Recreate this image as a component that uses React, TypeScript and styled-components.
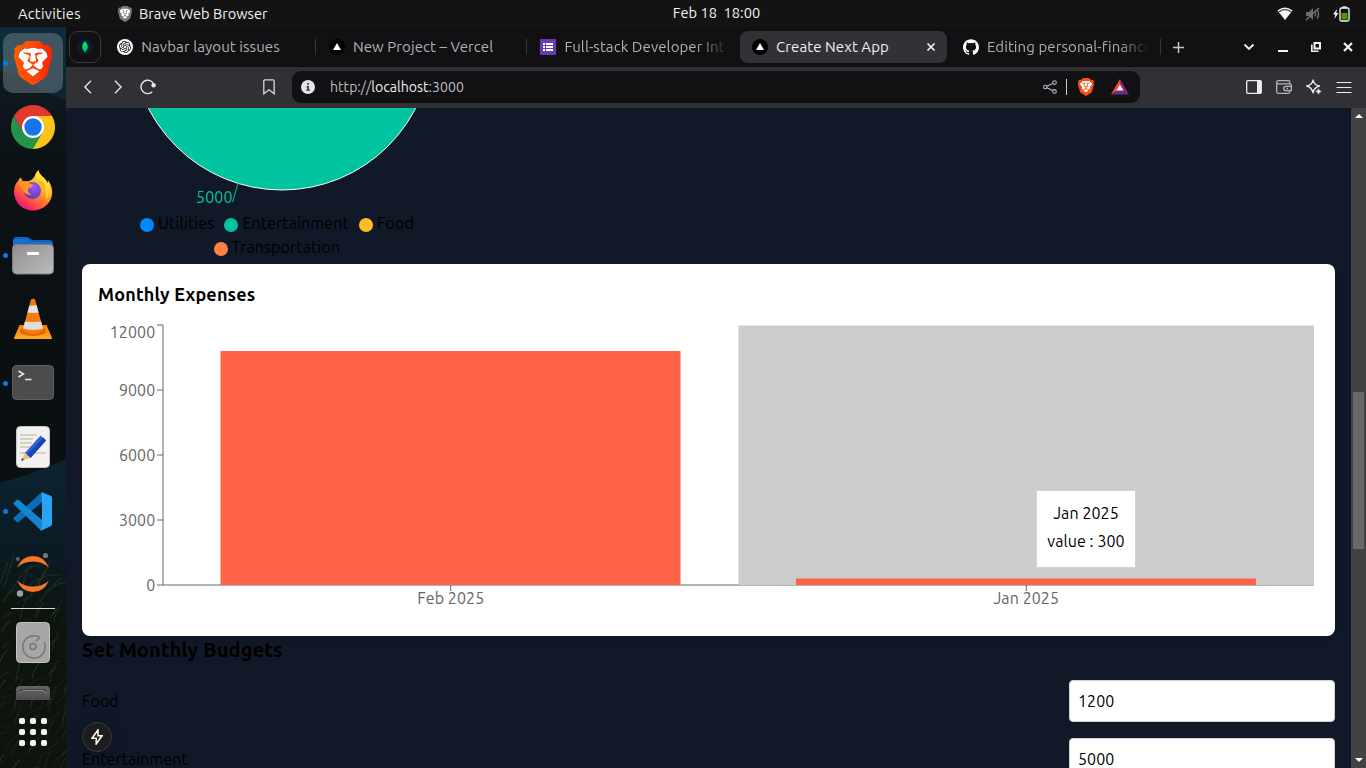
import React from "react";
import styled, { createGlobalStyle, css } from "styled-components";
import { SiBrave, SiMongodb, SiOpenai, SiGithub } from "react-icons/si";

const Global = createGlobalStyle`
  * { box-sizing: border-box; }
  html, body { margin: 0; padding: 0; background: #111827; overflow: hidden; }
  body { font-family: "Ubuntu", "Noto Sans", sans-serif; font-size: 16px; letter-spacing: 0.08px; color: #000; font-variant-ligatures: none; }
  svg { display: block; flex: none; }
`;

const Desktop = styled.div`
  width: 1366px;
  height: 768px;
  display: grid;
  grid-template-rows: 27px 741px;
  overflow: hidden;
`;

/* ---------- system bar ---------- */
const SystemBar = styled.header`
  display: grid;
  grid-template-columns: 1fr auto 1fr;
  align-items: center;
  background: #131313;
  color: #f2f2f2;
  font-size: 14.6px;
  letter-spacing: 0;
  line-height: 27px;
  white-space: pre;
`;
const SystemLeft = styled.div`
  display: flex;
  align-items: center;
  padding-left: 18px;
`;
const Activities = styled.span`
  width: 100px;
  letter-spacing: 0.3px;
`;
const AppName = styled.span`
  padding-left: 7px;
`;
const Clock = styled.span`
  position: relative;
  left: 33.5px;
  line-height: 25px;
  height: 27px;
`;
const SystemRight = styled.div`
  display: flex;
  align-items: center;
  justify-content: flex-end;
  gap: 12px;
  padding-right: 16px;
`;

const Body = styled.div`
  display: grid;
  grid-template-columns: 66px 1300px;
  min-height: 0;
`;

/* ---------- dock ---------- */
const Dock = styled.nav`
  position: relative;
  overflow: hidden;
  display: flex;
  flex-direction: column;
  align-items: center;
  gap: 4px;
  padding-top: 6px;
  background: #0b1013;
`;
const Wallpaper = styled.svg`
  position: absolute;
  inset: 0;
`;
const DockTile = styled.div<{ $active?: boolean; $nudge?: number }>`
  position: relative;
  width: 60px;
  height: 60px;
  flex: none;
  display: flex;
  align-items: center;
  justify-content: center;
  border-radius: 10px;
  padding-bottom: ${(p) => p.$nudge ?? 0}px;
  ${(p) => p.$active && css`background: rgba(125, 140, 147, 0.45);`}
`;
const RunningDot = styled.i`
  position: absolute;
  left: 0;
  top: 27.5px;
  width: 5px;
  height: 5px;
  border-radius: 50%;
  background: #0a78e6;
`;
const DockLine = styled.div`
  position: relative;
  width: 44px;
  height: 1px;
  margin: -1px 0 0;
  flex: none;
  background: #d8d8d8;
`;
const DockCut = styled.div`
  position: relative;
  height: 28px;
  flex: none;
  padding-top: 9px;
`;
const DockApps = styled.div`
  position: relative;
  padding-top: 9px;
`;

/* ---------- browser ---------- */
const Browser = styled.section`
  display: grid;
  grid-template-rows: 40px 41px 660px;
  min-width: 0;
`;
const TabStrip = styled.div`
  display: flex;
  align-items: center;
  background: #111113;
  padding-left: 3px;
`;
const PinnedTab = styled.div`
  width: 32px;
  height: 32px;
  margin-right: 4.3px;
  flex: none;
  display: flex;
  align-items: center;
  justify-content: center;
  border: 1px solid #38383c;
  border-radius: 9px;
`;
const PinnedIcon = styled.span`
  width: 16px;
  height: 16px;
  border-radius: 50%;
  background: #04202e;
  color: #06e567;
  display: flex;
  align-items: center;
  justify-content: center;
`;
const Tab = styled.div<{ $active?: boolean; $divider?: boolean; $last?: boolean }>`
  width: ${(p) => (p.$active ? 207.2 : p.$last ? 209.6 : 210.6)}px;
  margin-right: ${(p) => (p.$active ? 3.7 : 1)}px;
  height: ${(p) => (p.$active ? 32 : 16)}px;
  flex: none;
  display: flex;
  align-items: center;
  padding: 0 11px 0 12px;
  border-radius: ${(p) => (p.$active ? 8 : 0)}px;
  background: ${(p) => (p.$active ? "#313136" : "transparent")};
  border-right: ${(p) => (p.$divider ? "1px solid #37373b" : "0")};
`;
const TabTitle = styled.span<{ $active?: boolean; $fade?: boolean }>`
  flex: 1;
  min-width: 0;
  margin-left: 8px;
  overflow: hidden;
  white-space: nowrap;
  line-height: 24px;
  font-size: 15px;
  letter-spacing: 0.08px;
  color: ${(p) => (p.$active ? "#f0f0f2" : "#b0b0b3")};
  ${(p) => p.$fade && css`mask-image: linear-gradient(90deg, #000 calc(100% - 30px), transparent);`}
`;
const NewTab = styled.div`
  width: 34px;
  display: flex;
  justify-content: center;
`;
const WindowButtons = styled.div`
  margin-left: auto;
  display: flex;
  align-items: center;
  padding-right: 2px;
`;
const WindowButton = styled.div<{ $w: number }>`
  width: ${(p) => p.$w}px;
  display: flex;
  justify-content: center;
`;
const Toolbar = styled.div`
  display: flex;
  align-items: center;
  padding: 0 7px 1px;
  background: #313035;
`;
const ToolButton = styled.div`
  width: 30px;
  height: 32px;
  flex: none;
  display: flex;
  align-items: center;
  justify-content: center;
`;
const BookmarkSlot = styled.div`
  width: 129px;
  display: flex;
  justify-content: flex-end;
  padding-right: 17px;
`;
const AddressBar = styled.div`
  width: 848px;
  height: 32px;
  flex: none;
  display: flex;
  align-items: center;
  padding: 0 11px 0 9px;
  border-radius: 9px;
  background: #111114;
  color: #bdbdc1;
  font-size: 14.1px;
  letter-spacing: 0;
`;
const Url = styled.span`
  margin: 0 auto 0 15px;
  b { font-weight: 400; color: #ededf0; }
`;
const AddressActions = styled.div`
  display: flex;
  align-items: center;
`;
const AddressRule = styled.i`
  width: 1px;
  height: 16px;
  margin: 0 11px 0 9px;
  background: #c9c9cc;
`;
const RewardsIcon = styled.svg`
  margin-left: 17px;
`;
const ToolbarEnd = styled.div`
  display: flex;
  margin-left: auto;
`;

/* ---------- page ---------- */
const Viewport = styled.div`
  display: grid;
  grid-template-columns: 1285px 15px;
  min-height: 0;
`;
const Page = styled.main`
  position: relative;
  overflow: hidden;
  padding: 0 16px;
  background: #111827;
`;
const PieBlock = styled.div`
  width: 400px;
  height: 156px;
`;
const LegendRow = styled.div`
  display: flex;
  justify-content: center;
  height: 24px;
  line-height: 22px;
  letter-spacing: 0.13px;
`;
const LegendText = styled.span`
  display: block;
  height: 24px;
`;
const LegendItem = styled.span<{ $color: string }>`
  display: flex;
  align-items: center;
  margin-right: 10px;
  &::before {
    content: "";
    width: 14px;
    height: 14px;
    margin: 1px 4px 0 0;
    border-radius: 50%;
    background: ${(p) => p.$color};
  }
`;
const Card = styled.section`
  position: relative;
  height: 372px;
  padding: 16px;
  border-radius: 8px;
  background: #fff;
  box-shadow: 0 4px 6px -1px rgba(0, 0, 0, 0.1);
`;
const CardTitle = styled.h3`
  margin: 0 0 12px;
  font-size: 18px;
  font-weight: 700;
  letter-spacing: 0.18px;
  line-height: 28px;
`;
const Tooltip = styled.div`
  position: absolute;
  left: 954px;
  top: 226px;
  width: 100px;
  height: 78px;
  padding: 10px 0 0;
  border: 1px solid #d2d2d2;
  background: #fff;
  text-align: center;
`;
const TooltipLine = styled.p`
  margin: 0 0 4px;
  line-height: 24px;
  white-space: nowrap;
`;
const BudgetTitle = styled.h2`
  margin: 0 0 16px;
  font-size: 20px;
  font-weight: 700;
  letter-spacing: 0.16px;
  line-height: 28px;
`;
const BudgetRow = styled.div`
  display: flex;
  align-items: center;
  justify-content: space-between;
  height: 42px;
  margin-bottom: 16px;
`;
const BudgetField = styled.div`
  width: 266px;
  height: 42px;
  padding: 0 8px;
  line-height: 40px;
  border: 1px solid #d1d1d1;
  border-radius: 4px;
  background: #fff;
`;
const DevBadge = styled.div`
  position: absolute;
  left: 16px;
  top: 614px;
  width: 30px;
  height: 30px;
  display: flex;
  align-items: center;
  justify-content: center;
  border: 1px solid #3b3b3d;
  border-radius: 50%;
  background: #1d1d1f;
  box-shadow: 0 4px 16px rgba(0, 0, 0, 0.25);
`;
const ScrollTrack = styled.div`
  display: flex;
  flex-direction: column;
  align-items: center;
  padding: 6px 0 5px;
  background: #424242;
`;
const ScrollThumb = styled.div`
  width: 11px;
  height: 157px;
  margin: 274px 0 209px;
  flex: none;
  background: #686868;
`;

/* ---------- icons ---------- */
function Brave({ size, height, fill }: { size: number; height: number; fill: string }) {
  return (
    <svg width={size} height={height} viewBox="2 0 20 24" preserveAspectRatio="none">
      <defs>
        <linearGradient id="braveOrange" gradientUnits="userSpaceOnUse" x1="2" y1="0" x2="22" y2="0">
          <stop offset="0" stopColor="#ff5a00" />
          <stop offset="0.5" stopColor="#ff4a0a" />
          <stop offset="1" stopColor="#ff1f00" />
        </linearGradient>
      </defs>
      <path d="M5 6 8 3.500h8L19 6l.8 3-2.600 8L12 21l-5.200-4L4.200 9z" fill="#fff" />
      <SiBrave size={24} x={0} y={0} style={{ fill }} />
    </svg>
  );
}

const Triangle = () => (
  <svg width="16" height="16" viewBox="0 0 16 16">
    <circle cx="8" cy="8" r="8" fill="#000" />
    <path d="M8 4 12 11H4z" fill="#fff" />
  </svg>
);

const Chrome = () => (
  <svg width="44" height="44" viewBox="0 0 44 44">
    <path d="M22 11h19.05A22 22 0 0 1 22 44l-3-8z" fill="#fcc41a" />
    <path d="M2.95 11A22 22 0 0 0 22 44l9.5-16.5L22 22l-9.5 5.5z" fill="#249548" />
    <path d="M22 11h19.05A22 22 0 0 0 2.95 11l9.5 16.5L15 16z" fill="#e03a30" />
    <circle cx="22" cy="22" r="11" fill="#fff" />
    <circle cx="22" cy="22" r="8.7" fill="#1a73e8" />
  </svg>
);

const Firefox = () => (
  <svg width="40" height="42" viewBox="0 0 40 42">
    <defs>
      <linearGradient id="foxBody" x1="0.85" y1="0.1" x2="0.25" y2="1">
        <stop offset="0" stopColor="#fff04a" />
        <stop offset="0.35" stopColor="#ffb31f" />
        <stop offset="0.62" stopColor="#ff6a34" />
        <stop offset="0.85" stopColor="#fb2d5c" />
        <stop offset="1" stopColor="#e3148c" />
      </linearGradient>
      <radialGradient id="foxGlobe" cx="0.6" cy="0.3" r="0.75">
        <stop offset="0" stopColor="#9b5cf5" />
        <stop offset="1" stopColor="#5a35b8" />
      </radialGradient>
    </defs>
    <path d="M8 8.500c.5 2 1.500 3.200 2.800 4.200 1.500-.5 3-.6 4.200-.4C18 12 21 9 22 6.500 23 4 24 2.500 25.500 1c.5 4 3.500 6 6 8.500 1.500 1.500 2.500 3 3 4.500.5-1 .6-2 .3-3 3 4 4.600 8.500 4.400 13C38.800 33.600 30.500 41.500 20 41.500S1 33.500 1 22.500c0-4.500 1.500-8 4.200-10.500.2-1.500 1.300-2.600 2.800-3.500z" fill="url(#foxBody)" />
    <path d="M22 6.500C23 4 24 2.500 25.500 1c.5 4 3.500 6 6 8.500 6 6 6.500 15 1.500 21 1.500-9-2-14-11-24z" fill="#ffe03c" opacity="0.8" />
    <circle cx="19.500" cy="21.500" r="8.500" fill="url(#foxGlobe)" />
    <path d="M5.500 14c2-1.800 6-2 9.500-1.300 1.500 1.800 3 2.500 5.500 3-.2 2-3 3-5.500 3.800-.5 3 1 5.500 4 6-4 1.500-8-1-9.500-5.500z" fill="#ff9628" />
    <path d="M24 13.500c6 1.500 8 7 5.500 12 3.500-3 4-9 .5-12.500-2-1.500-4-1-6 .5z" fill="#ffb02c" />
  </svg>
);

const Files = () => (
  <svg width="42" height="40" viewBox="0 0 42 40">
    <defs>
      <linearGradient id="filesGrey" x1="0" y1="0" x2="1" y2="1">
        <stop offset="0" stopColor="#8f8f8f" />
        <stop offset="1" stopColor="#bcbcbc" />
      </linearGradient>
    </defs>
    <path d="M4 2h12l4 3h17q4 0 4 4v12H1V6q0-4 3-4z" fill="#0e61bd" />
    <path d="M1 10V7q0-3 3-3h11l4 3h18q4 0 4 4z" fill="#176fd0" />
    <rect x="0.500" y="9.500" width="41" height="29.500" rx="4" fill="url(#filesGrey)" stroke="#7c7c7c" />
    <rect x="15" y="17" width="12" height="3" rx="1" fill="#fff" />
  </svg>
);

const Vlc = () => (
  <svg width="38" height="42" viewBox="0 0 38 42">
    <defs>
      <linearGradient id="vlcBase" x1="0" y1="0" x2="0" y2="1">
        <stop offset="0" stopColor="#f47a0a" />
        <stop offset="1" stopColor="#ffab24" />
      </linearGradient>
      <clipPath id="vlcCone"><path d="M17 1.500q2-1.500 4 0l8.500 31q-10.500 7-21 0z" /></clipPath>
    </defs>
    <path d="M5.500 27h27L38 40q0 1-1 1H1q-1 0-1-1z" fill="url(#vlcBase)" />
    <ellipse cx="19" cy="33" rx="13" ry="5" fill="#e16605" />
    <g clipPath="url(#vlcCone)">
      <rect width="38" height="42" fill="#f57c0c" />
      <path d="M10 7q9 2 18-1v8q-9 2-18 0z" fill="#e3e3e3" />
      <path d="M6 22.500q13 3 26 0v7.500q-13 4-26 0z" fill="#dedede" />
    </g>
  </svg>
);

const Terminal = () => (
  <svg width="42" height="36" viewBox="0 0 42 36">
    <rect x="0.500" y="0.500" width="41" height="34" rx="4" fill="#4c4c4c" stroke="#5f5f5f" />
    <path d="m6.500 6 5 3-5 3M13 14.500h6.500" fill="none" stroke="#e8e8e8" strokeWidth="1.500" />
  </svg>
);

const TextEditor = () => (
  <svg width="34" height="42" viewBox="0 0 34 42">
    <rect x="0.500" y="0.500" width="33" height="41" rx="4" fill="#f1f1f0" stroke="#c9c9c9" />
    <path d="M4 9h17M4 13h13M4 17h12M4 21h11M4 27h26" stroke="#c6c6b8" strokeWidth="1.600" />
    <path d="M9 27 24.500 9.500l5.500 5L14.500 32z" fill="#2e5fd8" />
    <path d="M11 29 27.300 11.500l2.700 3L14.500 32z" fill="#1c43b0" />
    <path d="M9 27 5 34.500l9.500-2.500z" fill="#f1bd84" />
    <path d="M6.200 32 5 34.700l3-.8z" fill="#333" />
  </svg>
);

const VsCode = () => (
  <svg width="40" height="40" viewBox="0 0 40 40">
    <path d="M29 1 1 26.500q-1 1 0 2l2.800 2.500q1 .8 2 0L29 11z" fill="#0a6fb8" />
    <path d="M1 11.500q-1 1 0 2L27 38.500l2 .5V29L5.800 9q-1-.8-2 0z" fill="#1485d0" />
    <path d="M28.500 1 38 5q1 .5 1 2v26q0 1.500-1 2l-9.500 4.500q-1.500.2-1.500-1l2-1.500V11z" fill="#29a3f3" />
  </svg>
);

const Jupyter = () => (
  <svg width="36" height="46" viewBox="0 0 36 46">
    <path d="M2 15.500Q7 4 18 4t16 11.500Q27.500 9.500 18 9.500T2 15.500z" fill="#f37726" />
    <path d="M2 28.500Q7 40 18 40t16-11.500Q27.500 34.500 18 34.500T2 28.500z" fill="#f37726" />
    <circle cx="30.500" cy="3.500" r="2.600" fill="#767677" />
    <circle cx="2.800" cy="7" r="2" fill="#616262" />
    <circle cx="5" cy="41.500" r="3.200" fill="#9e9e9e" />
  </svg>
);

const Disk = () => (
  <svg width="34" height="42" viewBox="0 0 34 42">
    <rect x="0.500" y="0.500" width="33" height="40" rx="4" fill="#a6a6a6" stroke="#c4c4c4" />
    <path d="M24 15.500A11.200 11.200 0 1 0 28 20" fill="none" stroke="#777" strokeWidth="1.500" />
    <path d="m20 19 4-3.500" stroke="#777" strokeWidth="1.500" />
    <circle cx="17" cy="24.500" r="3" fill="none" stroke="#777" strokeWidth="1.500" />
  </svg>
);

const Drive = () => (
  <svg width="34" height="15" viewBox="0 0 34 15">
    <defs>
      <linearGradient id="driveGrey" x1="0" y1="0" x2="0" y2="1">
        <stop offset="0" stopColor="#666" />
        <stop offset="1" stopColor="#4b4d4b" />
      </linearGradient>
    </defs>
    <path d="M0 14V4q0-4 4-4h26q4 0 4 4v10z" fill="url(#driveGrey)" />
    <path d="M3 7q0-4 3-4h22q3 0 3 4l-4-2H7z" fill="#434343" />
    <path d="M3 7 7 4.500h20L31 7" fill="none" stroke="#858585" />
  </svg>
);

const AppsGrid = () => (
  <svg width="28" height="28" viewBox="0 0 28 28" fill="#f2f2f2">
    {[0, 11, 22].map((y) => [0, 11, 22].map((x) => <rect key={`${x}-${y}`} x={x} y={y} width="6" height="6" rx="1.800" />))}
  </svg>
);

const DockWallpaper = () => {
  const blades = Array.from({ length: 170 }, (_, i) => {
    const x = ((i * 37) % 82) - 12;
    const y = 440 + ((i * 71) % 290);
    const dx = 8 + ((i * 13) % 26);
    const dy = 6 + ((i * 17) % 20);
    return `M${x} ${y + dy}q${dx / 3} ${-dy * 0.7} ${dx} ${-dy}`;
  });
  return (
    <Wallpaper width="66" height="741" viewBox="0 0 66 741">
      <defs>
        <linearGradient id="sky" x1="0" y1="0" x2="0" y2="1">
          <stop offset="0" stopColor="#0d2c3a" />
          <stop offset="1" stopColor="#10202a" />
        </linearGradient>
        <linearGradient id="hill" x1="0" y1="0" x2="0" y2="1">
          <stop offset="0" stopColor="#0f1b21" />
          <stop offset="0.25" stopColor="#0b1114" />
          <stop offset="1" stopColor="#0a0f11" />
        </linearGradient>
        <linearGradient id="lake" x1="0" y1="0" x2="0" y2="1">
          <stop offset="0" stopColor="#0c2430" />
          <stop offset="0.5" stopColor="#0a1c26" />
          <stop offset="1" stopColor="#0b1512" />
        </linearGradient>
      </defs>
      <rect width="66" height="120" fill="url(#sky)" />
      <path d="M0 44Q20 48 34 58T66 73v380H0z" fill="url(#hill)" />
      <path d="M0 456Q30 448 66 432v160H0z" fill="url(#lake)" />
      <path d="M0 565 66 590v151H0z" fill="#0d130d" />
      <g fill="none" strokeWidth="1.100">
        {blades.map((d, i) => (
          <path key={d} d={d} transform="translate(0 95)" stroke={["#1c2819", "#172119", "#243120", "#121b15"][i % 4]} />
        ))}
        <path d="M0 556 8 535M4 560 14 528M12 565Q24 535 44 538M22 566Q38 546 62 548M30 570 50 535M40 575Q52 555 66 556" stroke="#223019" />
      </g>
    </Wallpaper>
  );
};

const dockApps: { icon: React.ReactNode; running?: boolean; active?: boolean; nudge?: number }[] = [
  { icon: <Brave size={38} height={44} fill="url(#braveOrange)" />, running: true, active: true },
  { icon: <Chrome /> },
  { icon: <Firefox />, nudge: 3 },
  { icon: <Files />, running: true, nudge: 1 },
  { icon: <Vlc /> },
  { icon: <Terminal />, running: true },
  { icon: <TextEditor /> },
  { icon: <VsCode />, running: true },
  { icon: <Jupyter /> },
];

/* ---------- charts ---------- */
const PieSlice = () => (
  <svg width="400" height="104" viewBox="0 68 400 104">
    <circle cx="200" cy="0" r="150" fill="#00c49f" stroke="#fff" />
    <path d="M156 143.500 150.500 162" stroke="#00c49f" fill="none" />
    <text x="150.500" y="163" textAnchor="end" fontSize="16" fill="#00c49f">5000</text>
  </svg>
);

const months = [
  { label: "Feb 2025", value: 10800 },
  { label: "Jan 2025", value: 300 },
];
const ticks = [0, 3000, 6000, 9000, 12000];
const yFor = (v: number) => 265 - (v / 12000) * 260;

const BarChart = () => (
  <svg width="1221" height="300" viewBox="0 0 1221 300">
    <g stroke="#666" strokeWidth="1">
      <path d="M65 265H1216M65 5V265" />
      {ticks.map((t) => <path key={t} d={`M59 ${yFor(t)}H65`} />)}
      {months.map((m, i) => <path key={m.label} d={`M${352.75 + i * 575.5} 265v6`} />)}
    </g>
    <rect x="640.500" y="5.500" width="575.500" height="259.500" fill="#ccc" />
    {months.map((m, i) => (
      <rect key={m.label} x={122.5 + i * 575.5} y={yFor(m.value)} width="460" height={265 - yFor(m.value)} fill="#ff6347" />
    ))}
    <g fill="#666" fontSize="16">
      {ticks.map((t) => (
        <text key={t} x="57.300" y={(t === 12000 ? 12 : yFor(t)) + 6} textAnchor="end">{t}</text>
      ))}
      {months.map((m, i) => (
        <text key={m.label} x={352.75 + i * 575.5} y="284" textAnchor="middle">{m.label}</text>
      ))}
    </g>
  </svg>
);

export default function App() {
  return (
    <Desktop>
      <Global />
      <SystemBar>
        <SystemLeft>
          <Activities>Activities</Activities>
          <Brave size={14} height={16} fill="#77797b" />
          <AppName>Brave Web Browser</AppName>
        </SystemLeft>
        <Clock>Feb 18  18:00</Clock>
        <SystemRight>
          <svg width="16" height="14" viewBox="0 0 16 14">
            <path d="M.5 3.500Q8-2.500 15.500 3.500L8 13z" fill="#f4f4f4" />
            <path d="M2 4.700Q8 .5 14 4.700" fill="none" stroke="#4a4a4a" strokeWidth="1.200" />
          </svg>
          <svg width="16" height="14" viewBox="0 0 16 14">
            <path d="M1 5h3l4-4v12L4 9H1z" fill="#6a6a6a" />
            <path d="M10 4.500q1.500 2.500 0 5M12 2.500q3 4.500 0 9M1 13 14 1" fill="none" stroke="#777" strokeWidth="1.300" />
          </svg>
          <svg width="17" height="16" viewBox="0 0 17 16">
            <path d="M4 3 0 8.500h2.300L1.300 13 5.500 7H3.300z" fill="#f4f4f4" />
            <rect x="7" y="2" width="9" height="13" rx="1.500" fill="none" stroke="#f4f4f4" strokeWidth="1.300" />
            <path d="M9.500.3h4v1.500h-4z" fill="#f4f4f4" />
            <path d="M8.500 7h6v6.500h-6z" fill="#4e9a06" />
          </svg>
        </SystemRight>
      </SystemBar>

      <Body>
        <Dock>
          <DockWallpaper />
          {dockApps.map((app, i) => (
            <DockTile key={i} $active={app.active} $nudge={app.nudge}>
              {app.icon}
              {app.running && <RunningDot />}
            </DockTile>
          ))}
          <DockLine />
          <DockTile><Disk /></DockTile>
          <DockCut><Drive /></DockCut>
          <DockApps><AppsGrid /></DockApps>
        </Dock>

        <Browser>
          <TabStrip>
            <PinnedTab>
              <PinnedIcon><SiMongodb size={12} /></PinnedIcon>
            </PinnedTab>
            <Tab $divider>
              <svg width="16" height="16" viewBox="0 0 16 16">
                <circle cx="8" cy="8" r="8" fill="#fff" />
                <SiOpenai size={12} x={2} y={2} color="#111" />
              </svg>
              <TabTitle>Navbar layout issues</TabTitle>
            </Tab>
            <Tab $divider>
              <Triangle />
              <TabTitle>New Project – Vercel</TabTitle>
            </Tab>
            <Tab>
              <svg width="16" height="16" viewBox="0 0 16 16">
                <rect width="16" height="16" rx="0.800" fill="#673ab7" />
                <path d="M3 4h2v2H3zm3 0h7v2H6zM3 7h2v2H3zm3 0h7v2H6zm-3 3h2v2H3zm3 0h7v2H6z" fill="#fff" />
              </svg>
              <TabTitle $fade>Full-stack Developer Int</TabTitle>
            </Tab>
            <Tab $active>
              <Triangle />
              <TabTitle $active>Create Next App</TabTitle>
              <svg width="10" height="10" viewBox="0 0 10 10">
                <path d="m1.500 1.500 7 7m0-7-7 7" stroke="#f2f2f4" strokeWidth="1.700" />
              </svg>
            </Tab>
            <Tab $divider $last>
              <SiGithub size={16} color="#fff" />
              <TabTitle $fade>Editing personal-finance</TabTitle>
            </Tab>
            <NewTab>
              <svg width="11" height="11" viewBox="0 0 11 11">
                <path d="M5.500 0v11M0 5.500h11" stroke="#c5c5c8" strokeWidth="1.500" />
              </svg>
            </NewTab>
            <WindowButtons>
              <WindowButton $w={34}>
                <svg width="12" height="8" viewBox="0 0 12 8"><path d="m1.500 1.500 4.500 4.500 4.500-4.500" fill="none" stroke="#f2f2f4" strokeWidth="1.800" /></svg>
              </WindowButton>
              <WindowButton $w={33}>
                <svg width="10" height="10" viewBox="0 0 10 10"><path d="M0 9h10" stroke="#f2f2f4" strokeWidth="2" /></svg>
              </WindowButton>
              <WindowButton $w={33}>
                <svg width="10" height="10" viewBox="0 0 10 10" fill="none" stroke="#f2f2f4"><path d="M3.500 1h5.500v5.500H3.500z" strokeWidth="2" /><path d="M.8 2.500V9.200H7.500" strokeWidth="1.600" /></svg>
              </WindowButton>
              <WindowButton $w={32}>
                <svg width="10" height="10" viewBox="0 0 10 10"><path d="m1 1 8 8m0-8-8 8" stroke="#f2f2f4" strokeWidth="2.200" /></svg>
              </WindowButton>
            </WindowButtons>
          </TabStrip>

          <Toolbar>
            <ToolButton>
              <svg width="8" height="14" viewBox="0 0 8 14"><path d="M7 .8.9 7 7 13.200" fill="none" stroke="#e9e9ec" strokeWidth="1.400" /></svg>
            </ToolButton>
            <ToolButton>
              <svg width="8" height="14" viewBox="0 0 8 14"><path d="M1 .8 7.100 7 1 13.200" fill="none" stroke="#e9e9ec" strokeWidth="1.400" /></svg>
            </ToolButton>
            <ToolButton>
              <svg width="16" height="16" viewBox="0 0 16 16"><path d="M12.300 12.800A6.700 6.700 0 1 1 13.500 4.500" fill="none" stroke="#e9e9ec" strokeWidth="1.400" /><circle cx="13.600" cy="6.300" r="2.200" fill="#e9e9ec" /></svg>
            </ToolButton>
            <BookmarkSlot>
              <svg width="12" height="16" viewBox="0 0 12 16"><path d="M2 .8h8q1.200 0 1.200 1.200v12.800L6 10.800.8 14.800V2Q.8.8 2 .8z" fill="none" stroke="#d9d9dc" strokeWidth="1.300" /></svg>
            </BookmarkSlot>
            <AddressBar>
              <svg width="14" height="14" viewBox="0 0 14 14"><circle cx="7" cy="7" r="7" fill="#e4e4e8" /><path d="M6.200 3h1.700v1.700H6.200zM5.500 6h2.400v3.500h1v1.300H5.300V9.500h1V7.300h-.8z" fill="#333" /></svg>
              <Url>http://<b>localhost</b>:3000</Url>
              <AddressActions>
                <svg width="14" height="14" viewBox="0 0 14 14" fill="none" stroke="#b9b9bd" strokeWidth="1.100"><circle cx="2.300" cy="7" r="1.700" /><circle cx="11.500" cy="2.600" r="1.800" /><circle cx="11.500" cy="11.400" r="1.800" /><path d="m4 6.200 5.800-2.800M4 7.800l5.800 2.800" /></svg>
                <AddressRule />
                <Brave size={16} height={18} fill="#fb4f10" />
                <RewardsIcon width="18" height="16" viewBox="0 0 18 16">
                  <path d="M9 0 0 15.500 9 10z" fill="#ff4724" />
                  <path d="M9 0v10l9 5.500z" fill="#9e1f63" />
                  <path d="M0 15.500h18L9 10z" fill="#662d91" />
                  <path d="M9 5.500 12.500 11.500h-7z" fill="#fff" />
                </RewardsIcon>
              </AddressActions>
            </AddressBar>
            <ToolbarEnd>
              <ToolButton>
                <svg width="16" height="14" viewBox="0 0 16 14"><rect x="0.700" y="0.700" width="14.600" height="12.600" rx="1" fill="none" stroke="#ededf0" strokeWidth="1.300" /><path d="M11 1h4v12h-4z" fill="#ededf0" /></svg>
              </ToolButton>
              <ToolButton>
                <svg width="16" height="14" viewBox="0 0 16 14" fill="none" stroke="#b7b7bb" strokeWidth="1.300"><path d="M13.800 4V2.200Q13.800.7 12.300.7H2.500Q.7.700.7 2.500V11.500q0 1.800 1.800 1.800h9.800q1.500 0 1.500-1.500V10.700M.7 3.800h12.800q1.800 0 1.800 1.500v5.400H10q-2.200 0-2.200-2.200T10 6.300h5.200" /><path d="M10.500 8.500h1.500" /></svg>
              </ToolButton>
              <ToolButton>
                <svg width="16" height="16" viewBox="0 0 16 16"><path d="M7 .8Q7.800 5.800 13.500 7 8.200 8.200 7 13.800 5.800 8.200.6 7 6.200 5.800 7 .8z" fill="none" stroke="#ededf0" strokeWidth="1.300" strokeLinejoin="round" /><path d="M12.500 9.800q.4 2.300 2.700 2.700-2.300.4-2.700 2.700-.4-2.300-2.700-2.700 2.300-.4 2.700-2.700z" fill="#ededf0" stroke="#ededf0" strokeWidth="0.500" /></svg>
              </ToolButton>
              <ToolButton>
                <svg width="16" height="13" viewBox="0 0 16 13"><path d="M.5 1.500h15M.5 6.500h15M.5 11.500h15" stroke="#ededf0" strokeWidth="1.200" /></svg>
              </ToolButton>
            </ToolbarEnd>
          </Toolbar>

          <Viewport>
            <Page>
              <PieBlock>
                <PieSlice />
                <LegendRow>
                  <LegendItem $color="#0088fe"><LegendText>Utilities</LegendText></LegendItem>
                  <LegendItem $color="#00c49f"><LegendText>Entertainment</LegendText></LegendItem>
                  <LegendItem $color="#ffbb28"><LegendText>Food</LegendText></LegendItem>
                </LegendRow>
                <LegendRow>
                  <LegendItem $color="#ff8042"><LegendText>Transportation</LegendText></LegendItem>
                </LegendRow>
              </PieBlock>
              <Card>
                <CardTitle>Monthly Expenses</CardTitle>
                <BarChart />
                <Tooltip>
                  <TooltipLine>Jan 2025</TooltipLine>
                  <TooltipLine>value : 300</TooltipLine>
                </Tooltip>
              </Card>
              <BudgetTitle>Set Monthly Budgets</BudgetTitle>
              <BudgetRow>
                <span>Food</span>
                <BudgetField>1200</BudgetField>
              </BudgetRow>
              <BudgetRow>
                <span>Entertainment</span>
                <BudgetField>5000</BudgetField>
              </BudgetRow>
              <DevBadge>
                <svg width="12" height="16" viewBox="0 0 12 16"><path d="M7 1 1 9.200h4.200V15L11 6.800H7z" fill="none" stroke="#fff" strokeWidth="1.500" /></svg>
              </DevBadge>
            </Page>
            <ScrollTrack>
              <svg width="8" height="4" viewBox="0 0 8 4"><path d="M0 4 4 0l4 4z" fill="#fff" /></svg>
              <ScrollThumb />
              <svg width="8" height="4" viewBox="0 0 8 4"><path d="M0 0h8L4 4z" fill="#fff" /></svg>
            </ScrollTrack>
          </Viewport>
        </Browser>
      </Body>
    </Desktop>
  );
}
